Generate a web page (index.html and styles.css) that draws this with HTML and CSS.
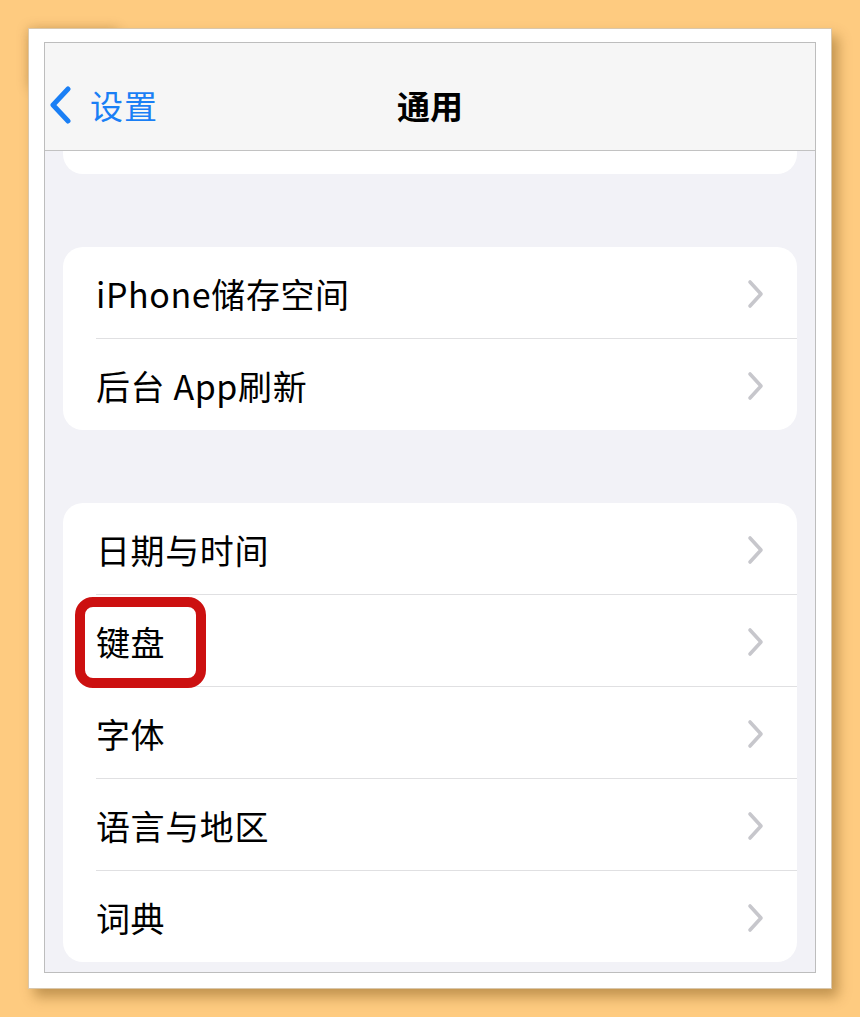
FILE: index.html
```html
<!DOCTYPE html>
<html lang="zh-CN">
<head>
<meta charset="utf-8">
<title>通用</title>
<link rel="stylesheet" href="styles.css">
</head>
<body>
<div class="paper">
  <div class="screen">
    <div class="nav">
      <div class="back">
        <svg class="back-icon" width="26" height="38" viewBox="0 0 26 38"><path d="M20 3 L5 19 L20 35" fill="none" stroke="#1a7ff5" stroke-width="5" stroke-linecap="round" stroke-linejoin="round"/></svg>
        <span class="back-text">设置</span>
      </div>
      <div class="title">通用</div>
      <div class="nav-spacer"></div>
    </div>
    <div class="content">
      <div class="card card-partial"></div>
      <div class="card">
        <div class="row"><span class="label">iPhone储存空间</span><svg class="chev" width="18" height="30" viewBox="0 0 18 30"><path d="M3 3 L14 15 L3 27" fill="none" stroke="#c7c7cc" stroke-width="3.6" stroke-linecap="round" stroke-linejoin="round"/></svg></div>
        <div class="row"><span class="label">后台 App刷新</span><svg class="chev" width="18" height="30" viewBox="0 0 18 30"><path d="M3 3 L14 15 L3 27" fill="none" stroke="#c7c7cc" stroke-width="3.6" stroke-linecap="round" stroke-linejoin="round"/></svg></div>
      </div>
      <div class="card card-hl">
        <div class="row"><span class="label">日期与时间</span><svg class="chev" width="18" height="30" viewBox="0 0 18 30"><path d="M3 3 L14 15 L3 27" fill="none" stroke="#c7c7cc" stroke-width="3.6" stroke-linecap="round" stroke-linejoin="round"/></svg></div>
        <div class="row"><span class="label">键盘</span><svg class="chev" width="18" height="30" viewBox="0 0 18 30"><path d="M3 3 L14 15 L3 27" fill="none" stroke="#c7c7cc" stroke-width="3.6" stroke-linecap="round" stroke-linejoin="round"/></svg></div>
        <div class="row"><span class="label">字体</span><svg class="chev" width="18" height="30" viewBox="0 0 18 30"><path d="M3 3 L14 15 L3 27" fill="none" stroke="#c7c7cc" stroke-width="3.6" stroke-linecap="round" stroke-linejoin="round"/></svg></div>
        <div class="row"><span class="label">语言与地区</span><svg class="chev" width="18" height="30" viewBox="0 0 18 30"><path d="M3 3 L14 15 L3 27" fill="none" stroke="#c7c7cc" stroke-width="3.6" stroke-linecap="round" stroke-linejoin="round"/></svg></div>
        <div class="row"><span class="label">词典</span><svg class="chev" width="18" height="30" viewBox="0 0 18 30"><path d="M3 3 L14 15 L3 27" fill="none" stroke="#c7c7cc" stroke-width="3.6" stroke-linecap="round" stroke-linejoin="round"/></svg></div>
        <div class="highlight"></div>
      </div>
    </div>
  </div>
</div>
</body>
</html>
```

FILE: styles.css
```css
html, body {
  margin: 0;
  padding: 0;
}
body {
  background: #fecb80;
  width: 860px;
  height: 1017px;
  overflow: hidden;
  font-family: "Noto Sans CJK SC", "Noto Sans", sans-serif;
  padding-top: 28px;
  box-sizing: border-box;
}
.paper {
  position: relative;
  margin-left: 28px;
  width: 804px;
  height: 961px;
  box-sizing: border-box;
  background: #ffffff;
  border: 1px solid rgba(170, 130, 70, 0.45);
  padding: 13px 15px 0 15px;
  box-shadow: 6px 8px 12px rgba(120, 80, 20, 0.45);
}
.paper::before {
  content: "";
  position: absolute;
  left: 2px;
  top: 2px;
  width: 90px;
  height: 60px;
  border-radius: 0 0 100% 0;
  box-shadow: -3px -3px 12px rgba(120, 80, 20, 0.28);
  z-index: -1;
}
.screen {
  position: relative;
  z-index: 1;
  width: 772px;
  height: 931px;
  box-sizing: border-box;
  border: 1px solid #bdbdbd;
  background: #f2f2f7;
  overflow: hidden;
}
.nav {
  height: 108px;
  box-sizing: border-box;
  background: #f6f6f6;
  border-bottom: 1px solid #c2c2c2;
  display: flex;
  align-items: center;
  padding-top: 16px;
  padding-left: 3px;
}
.back {
  display: flex;
  align-items: center;
  width: 200px;
  gap: 16px;
}
.back-icon {
  display: block;
}
.back-text {
  color: #1a7ff5;
  font-size: 33px;
  line-height: 40px;
  letter-spacing: 1px;
}
.title {
  flex: 1;
  text-align: center;
  font-size: 33px;
  font-weight: 700;
  color: #000;
  line-height: 40px;
  padding-right: 3px;
}
.nav-spacer {
  width: 200px;
}
.content {
  padding: 0 18px;
}
.card {
  background: #ffffff;
  border-radius: 20px;
  margin-bottom: 73px;
  position: relative;
}
.card-partial {
  height: 23px;
  border-radius: 0 0 20px 20px;
}
.row {
  height: 91px;
  display: flex;
  align-items: center;
  justify-content: space-between;
  margin-left: 33px;
  padding-right: 32px;
}
.row + .row {
  border-top: 1px solid #e0e0e2;
}
.label {
  font-size: 34px;
  color: #000;
  line-height: 40px;
  margin-top: 2px;
  letter-spacing: 0.6px;
}
.chev {
  display: block;
  margin-top: 2px;
}
.highlight {
  position: absolute;
  left: 12px;
  top: 94px;
  width: 131px;
  height: 91px;
  box-sizing: border-box;
  border: 10px solid #cc1010;
  border-radius: 18px;
}
```
